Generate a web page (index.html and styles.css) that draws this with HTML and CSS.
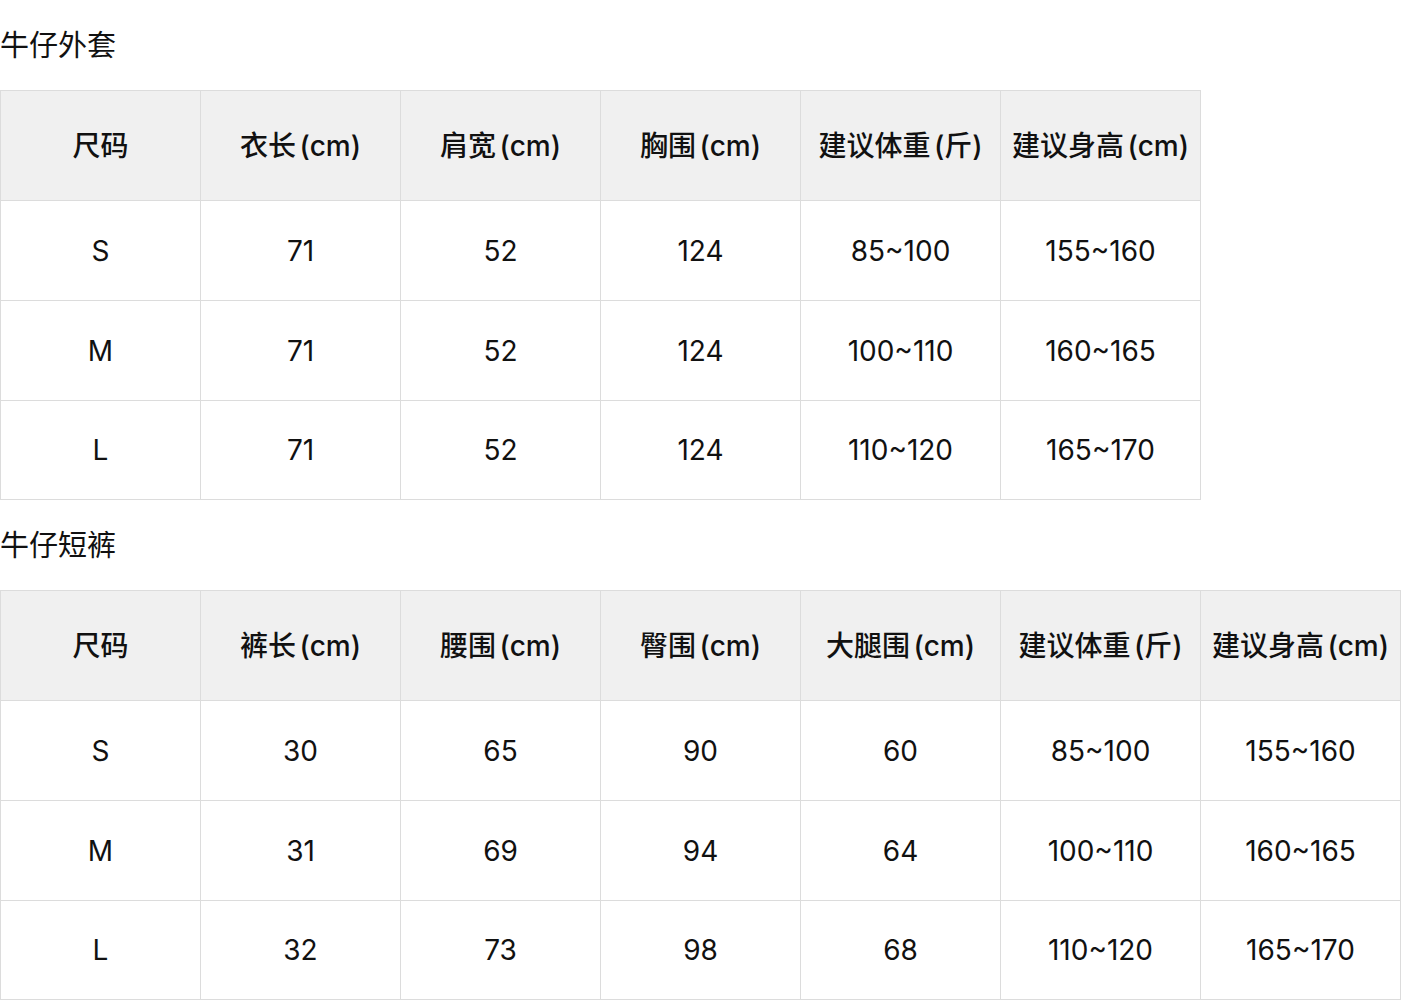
FILE: index.html
```html
<!DOCTYPE html>
<html lang="zh">
<head>
<meta charset="utf-8">
<link rel="stylesheet" href="styles.css">
</head>
<body>
<h2 class="title">牛仔外套</h2>
<table class="size-table">
<thead>
<tr><th>尺码</th><th>衣长 (cm)</th><th>肩宽 (cm)</th><th>胸围 (cm)</th><th>建议体重 (斤)</th><th>建议身高 (cm)</th></tr>
</thead>
<tbody>
<tr><td>S</td><td>71</td><td>52</td><td>124</td><td>85~100</td><td>155~160</td></tr>
<tr><td>M</td><td>71</td><td>52</td><td>124</td><td>100~110</td><td>160~165</td></tr>
<tr><td>L</td><td>71</td><td>52</td><td>124</td><td>110~120</td><td>165~170</td></tr>
</tbody>
</table>
<h2 class="title">牛仔短裤</h2>
<table class="size-table">
<thead>
<tr><th>尺码</th><th>裤长 (cm)</th><th>腰围 (cm)</th><th>臀围 (cm)</th><th>大腿围 (cm)</th><th>建议体重 (斤)</th><th>建议身高 (cm)</th></tr>
</thead>
<tbody>
<tr><td>S</td><td>30</td><td>65</td><td>90</td><td>60</td><td>85~100</td><td>155~160</td></tr>
<tr><td>M</td><td>31</td><td>69</td><td>94</td><td>64</td><td>100~110</td><td>160~165</td></tr>
<tr><td>L</td><td>32</td><td>73</td><td>98</td><td>68</td><td>110~120</td><td>165~170</td></tr>
</tbody>
</table>
</body>
</html>
```
FILE: styles.css
```css
html, body {
  margin: 0;
  padding: 0;
  background: #fff;
  color: #111;
  font-family: Inter, "Noto Sans CJK SC", sans-serif;
}
.title {
  margin: 0;
  height: 90px;
  line-height: 92px;
  font-size: 29px;
  font-weight: 400;
}
.size-table {
  border-collapse: collapse;
  table-layout: fixed;
}
.size-table th,
.size-table td {
  width: 199px;
  padding: 0;
  border: 1px solid #dcdcdc;
  text-align: center;
  font-size: 28px;
  font-weight: 400;
}
.size-table th {
  height: 105px;
  padding-bottom: 4px;
  background: #f0f0f0;
  font-weight: 500;
  word-spacing: -4px;
}
.size-table td {
  height: 99px;
}
.size-table tbody tr:last-child td {
  height: 98px;
}
```
